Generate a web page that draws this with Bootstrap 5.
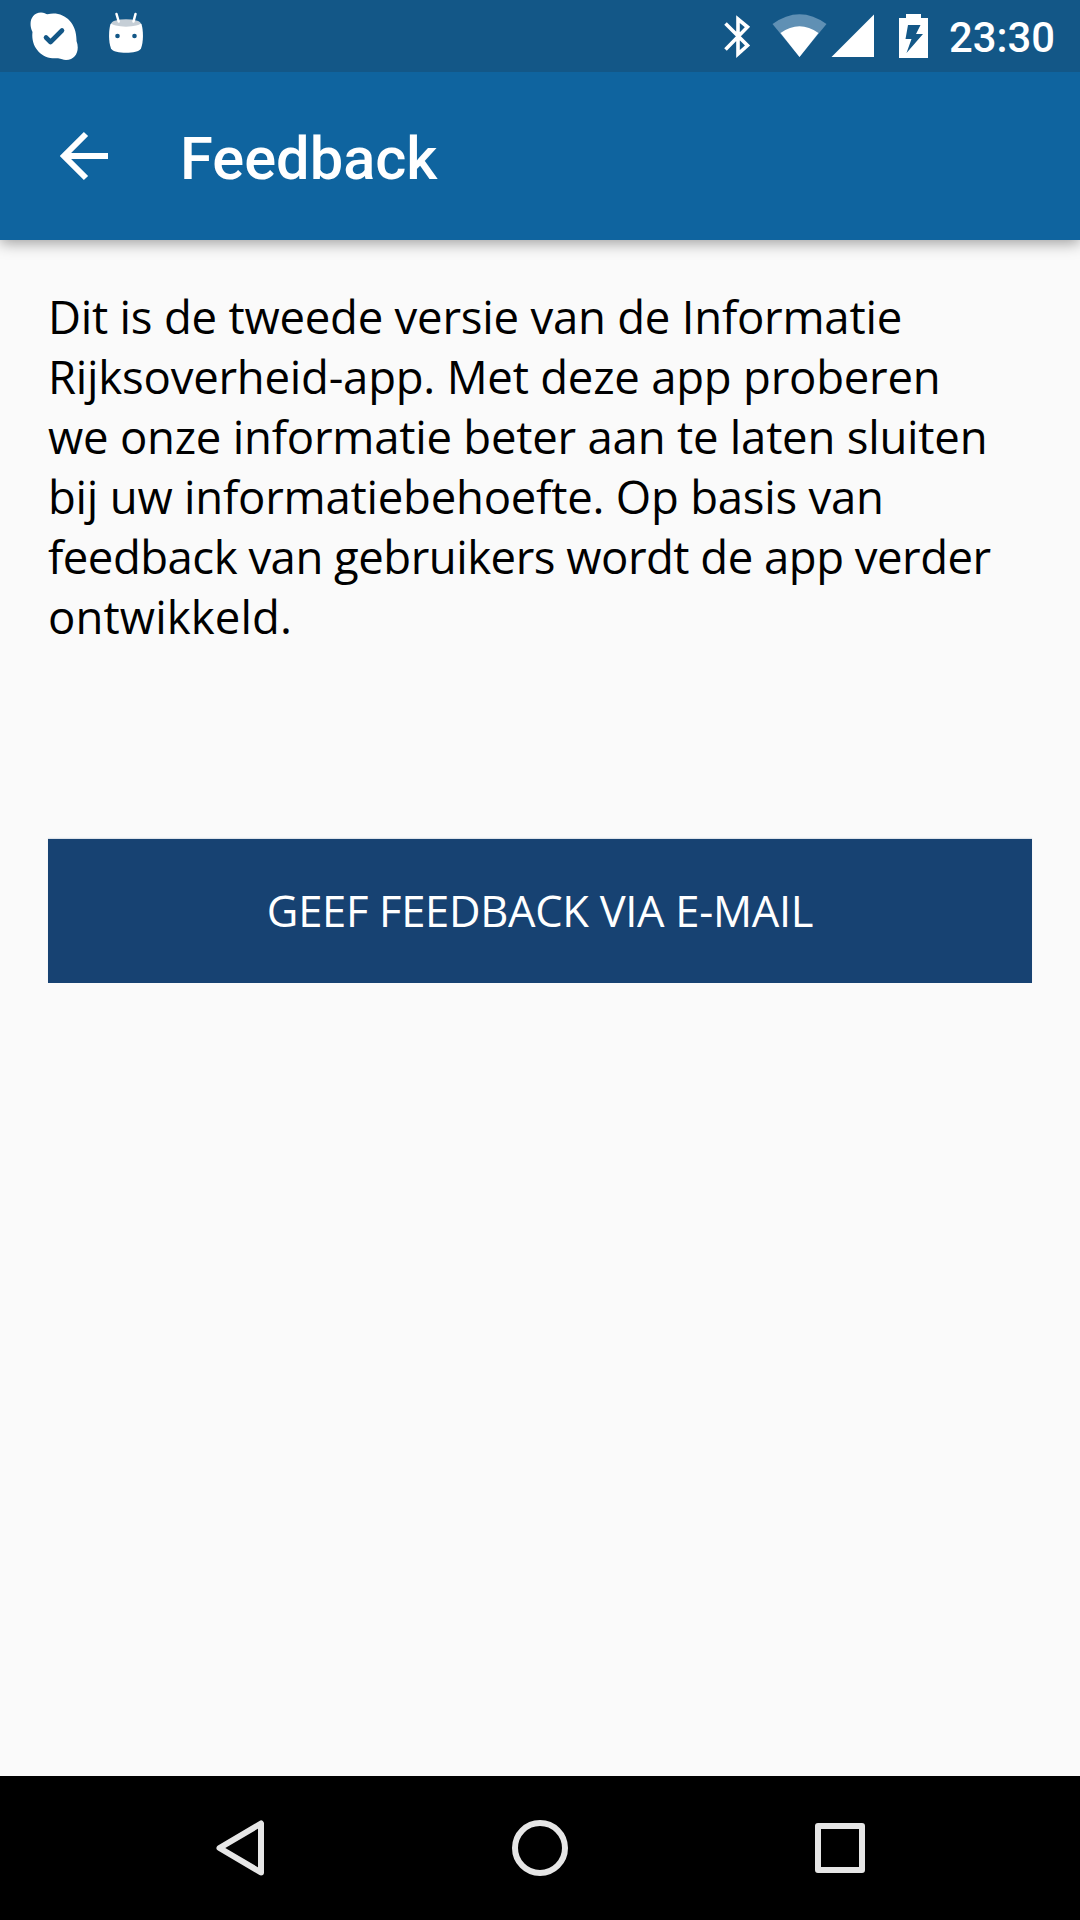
<!DOCTYPE html>
<html lang="nl">
<head>
<meta charset="utf-8">
<meta name="viewport" content="width=device-width, initial-scale=1">
<title>Feedback</title>
<link rel="stylesheet" href="https://cdn.jsdelivr.net/npm/bootstrap@5.3.0/dist/css/bootstrap.min.css">
<style>
  body { background: #fafafa; color: #000; font-family: "Open Sans", "Noto Sans", sans-serif; }
  svg { display: block; flex: none; }
  .top-area { box-shadow: 0 3px 14px rgba(0,0,0,.38); }
  .status-bar { height: 72px; background: #135787; padding: 0 25px 0 30px; font-family: Roboto, sans-serif; }
  .notice-icons { gap: 29px; }
  .clock { font-size: 41.8px; font-weight: 500; line-height: 72px; margin-left: 19px; padding-top: 3px; }
  .app-bar { height: 168px; background: #0f649f; padding: 0 57px; }
  .app-title { font: 500 59.6px/70px Roboto, sans-serif; margin: 6px 0 0 69px; }
  .content-pane { padding: 46px 48px 0; }
  .intro { font-size: 45.5px; line-height: 60px; height: 553px; letter-spacing: -.23px; }
  .intro span { white-space: nowrap; display: table; }
  .intro .tight { letter-spacing: -.5px; }
  .intro .loose { letter-spacing: .1px; }
  .btn-mail { --bs-btn-color: #fff; --bs-btn-bg: #174272; --bs-btn-border-width: 0; height: 144px; font-size: 43.5px; letter-spacing: -.3px; box-shadow: 0 -1px 1px rgba(23,66,114,.12); }
  .nav-keys { height: 144px; background: #000; }
</style>
</head>
<body class="vh-100 d-flex flex-column overflow-hidden">
<header class="top-area text-white">
  <div class="status-bar d-flex align-items-center justify-content-between">
    <div class="notice-icons d-flex align-items-center">
      <svg width="48" height="72" viewBox="30 0 48 72"><path fill="#fff" d="M41 12.500C44 12.500 46 14 47.500 14.300C63 10.500 77 22 76.500 41C80 50 76 60 66 60C63 60 61.500 58.500 58 58.200C42 60 30.500 47 32.500 32C28 23 31.500 12.500 41 12.500Z"/><path fill="none" stroke="#135787" stroke-width="4.600" stroke-linecap="round" stroke-linejoin="round" d="M46 37.500L50.500 42L62 30.500"/></svg>
      <svg width="38" height="72" viewBox="107 0 38 72"><path fill="#fff" d="M110.500 24C116 18.500 136 18.500 141.500 24C143.500 31 143.500 42 141 48.500C138 54.300 114 54.300 111 48.500C108.500 42 108.500 31 110.500 24Z"/><ellipse cx="126" cy="23" rx="14.500" ry="3.700" fill="#c5ced6"/><path stroke="#fff" stroke-width="2.500" stroke-linecap="round" d="M116.500 14L118.700 21.500M135.500 14L133.500 21.500"/><g fill="#135787"><circle cx="117.500" cy="36" r="2.300"/><circle cx="134.500" cy="36" r="2.300"/></g></svg>
    </div>
    <div class="d-flex align-items-center">
      <svg width="206" height="72" viewBox="724 0 206 72"><path fill="none" stroke="#fff" stroke-width="3.600" d="M725.500 23.500L747.500 45.500L738 54V19L747.500 27L725.500 49.500"/><path fill="#6090b4" d="M772.500 24Q799.500 4.500 826.500 24L799.500 57Z"/><path fill="#fff" d="M780.500 33Q799.500 19.500 818.500 33L799.500 57ZM831.500 57L874 14.500V57Z"/><path fill="#fff" d="M899 18H906V14H921V18H928V58H899Z"/><path fill="#135787" d="M908 25H920.500L916 34H923L906.500 53L911.500 39H905.500Z"/></svg>
      <span class="clock">23:30</span>
    </div>
  </div>
  <div class="app-bar d-flex align-items-center">
    <svg width="54" height="54" viewBox="57 129 54 54"><path fill="none" stroke="#fff" stroke-width="6" d="M108 156H64M86 134L64 156L86 178"/></svg>
    <h1 class="app-title">Feedback</h1>
  </div>
</header>
<main class="content-pane flex-grow-1">
  <p class="intro mb-0"><span>Dit is de tweede versie van de Informatie</span> <span>Rijksoverheid-app. Met deze app proberen</span> <span>we onze informatie beter aan te laten sluiten</span> <span>bij uw informatiebehoefte. Op basis van</span> <span class="tight">feedback van gebruikers wordt de app verder</span> <span class="loose">ontwikkeld.</span></p>
  <button type="button" class="btn btn-mail w-100 rounded-0 p-0 text-uppercase">Geef feedback via e-mail</button>
</main>
<nav class="nav-keys d-flex justify-content-center align-items-center">
  <svg width="650" height="56" viewBox="215 1820 650 56"><g fill="none" stroke="#e6e6e6" stroke-width="6" stroke-linejoin="round"><path d="M261 1823.500V1872.500L219.500 1848Z"/><circle cx="540" cy="1848" r="25"/><rect x="818" y="1826" width="44" height="44"/></g></svg>
</nav>
<script src="https://cdn.jsdelivr.net/npm/bootstrap@5.3.0/dist/js/bootstrap.bundle.min.js"></script>
</body>
</html>
